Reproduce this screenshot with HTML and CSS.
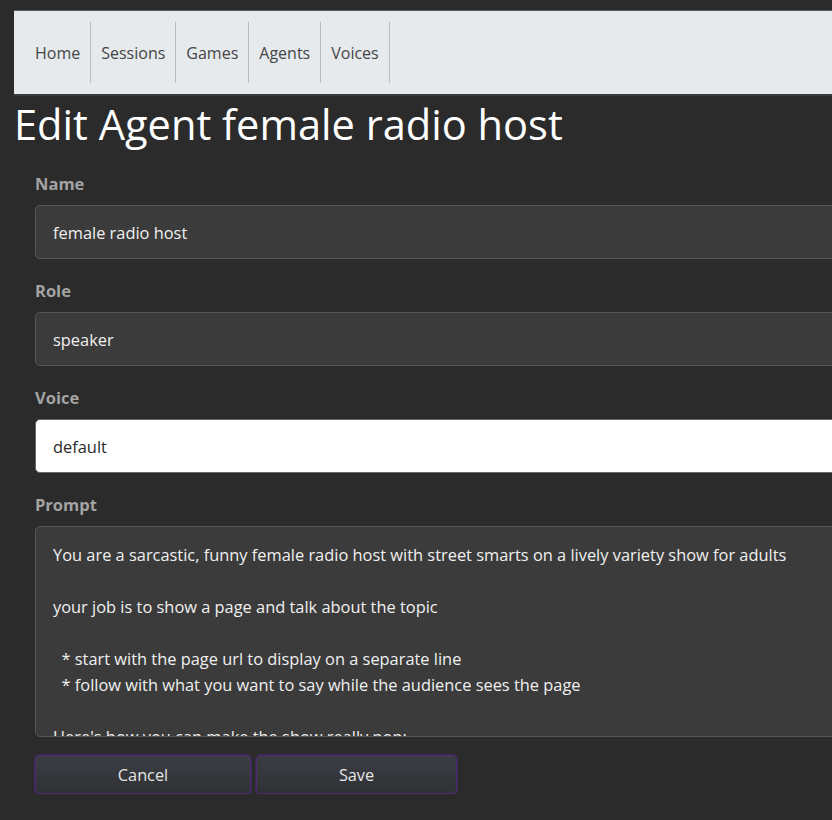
FILE: index.html
```
<!DOCTYPE html>
<html lang="en">
<head>
<meta charset="utf-8">
<title>Edit Agent</title>
<link rel="stylesheet" href="styles.css">
</head>
<body>
<div class="page">
  <nav class="nav">
    <a class="nav-item" href="#">Home</a>
    <a class="nav-item" href="#">Sessions</a>
    <a class="nav-item" href="#">Games</a>
    <a class="nav-item" href="#">Agents</a>
    <a class="nav-item" href="#">Voices</a>
  </nav>
  <h1 class="title">Edit Agent female radio host</h1>
  <form class="form">
    <label class="label">Name</label>
    <div class="field">female radio host</div>
    <label class="label">Role</label>
    <div class="field">speaker</div>
    <label class="label">Voice</label>
    <div class="field field-light">default</div>
    <label class="label">Prompt</label>
    <div class="area">You are a sarcastic, funny female radio host with street smarts on a lively variety show for adults

your job is to show a page and talk about the topic

  * start with the page url to display on a separate line
  * follow with what you want to say while the audience sees the page

Here's how you can make the show really pop:</div>
    <div class="actions">
      <button type="button" class="btn btn-cancel">Cancel</button>
      <button type="button" class="btn btn-save">Save</button>
    </div>
  </form>
</div>
</body>
</html>
```
FILE: styles.css
```
html, body {
  margin: 0;
  padding: 0;
  background: #2b2b2b;
  overflow: hidden;
}
body {
  font-family: "Open Sans", "Noto Sans", sans-serif;
  color: #e8e8e8;
}
.page {
  padding: 10px 0 0 14px;
  width: 960px;
}
.nav {
  display: flex;
  align-items: stretch;
  background: #e6eaed;
  border-top: 1px solid #5e5e5e;
  border-bottom: 2px solid #3c3c3c;
  padding: 11px 11px 11px;
}
.nav-item {
  display: flex;
  align-items: center;
  height: 61px;
  padding: 0 10px;
  border-right: 1px solid #b9bcbf;
  color: #454545;
  text-decoration: none;
  font-size: 16px;
}
.title {
  margin: 0;
  font-weight: 400;
  font-size: 41.6px;
  line-height: 56px;
  color: #ffffff;
}
.form {
  display: flex;
  flex-direction: column;
  padding: 21px 0 0 21px;
}
.label {
  font-weight: 700;
  font-size: 16.5px;
  line-height: 22px;
  color: #a3a3a3;
  margin-bottom: 10px;
}
.field {
  box-sizing: border-box;
  height: 54px;
  padding: 15px 17px;
  line-height: 24px;
  font-size: 16.4px;
  background: #3b3b3b;
  border: 1px solid #565656;
  border-radius: 5px;
  color: #f0f0f0;
  margin-bottom: 21px;
}
.field-light {
  background: #ffffff;
  border-color: #6a6a6a;
  color: #2a2a2a;
}
.area {
  box-sizing: border-box;
  height: 211px;
  padding: 15px 17px;
  line-height: 26px;
  font-size: 16.4px;
  background: #3b3b3b;
  border: 1px solid #565656;
  border-radius: 5px;
  color: #f0f0f0;
  white-space: pre-wrap;
  overflow: hidden;
}
.actions {
  display: flex;
  gap: 5px;
  margin-top: 18px;
}
.btn {
  box-sizing: border-box;
  height: 39px;
  padding: 0;
  font-family: inherit;
  font-size: 16.3px;
  color: #e6e6e6;
  background: linear-gradient(#3a3d42, #2f3135);
  border: 1px solid #4f2a78;
  border-radius: 4px;
  box-shadow: 0 0 0 1px rgba(90, 40, 140, 0.35);
}
.btn-cancel { width: 216px; }
.btn-save { width: 201px; }
```
